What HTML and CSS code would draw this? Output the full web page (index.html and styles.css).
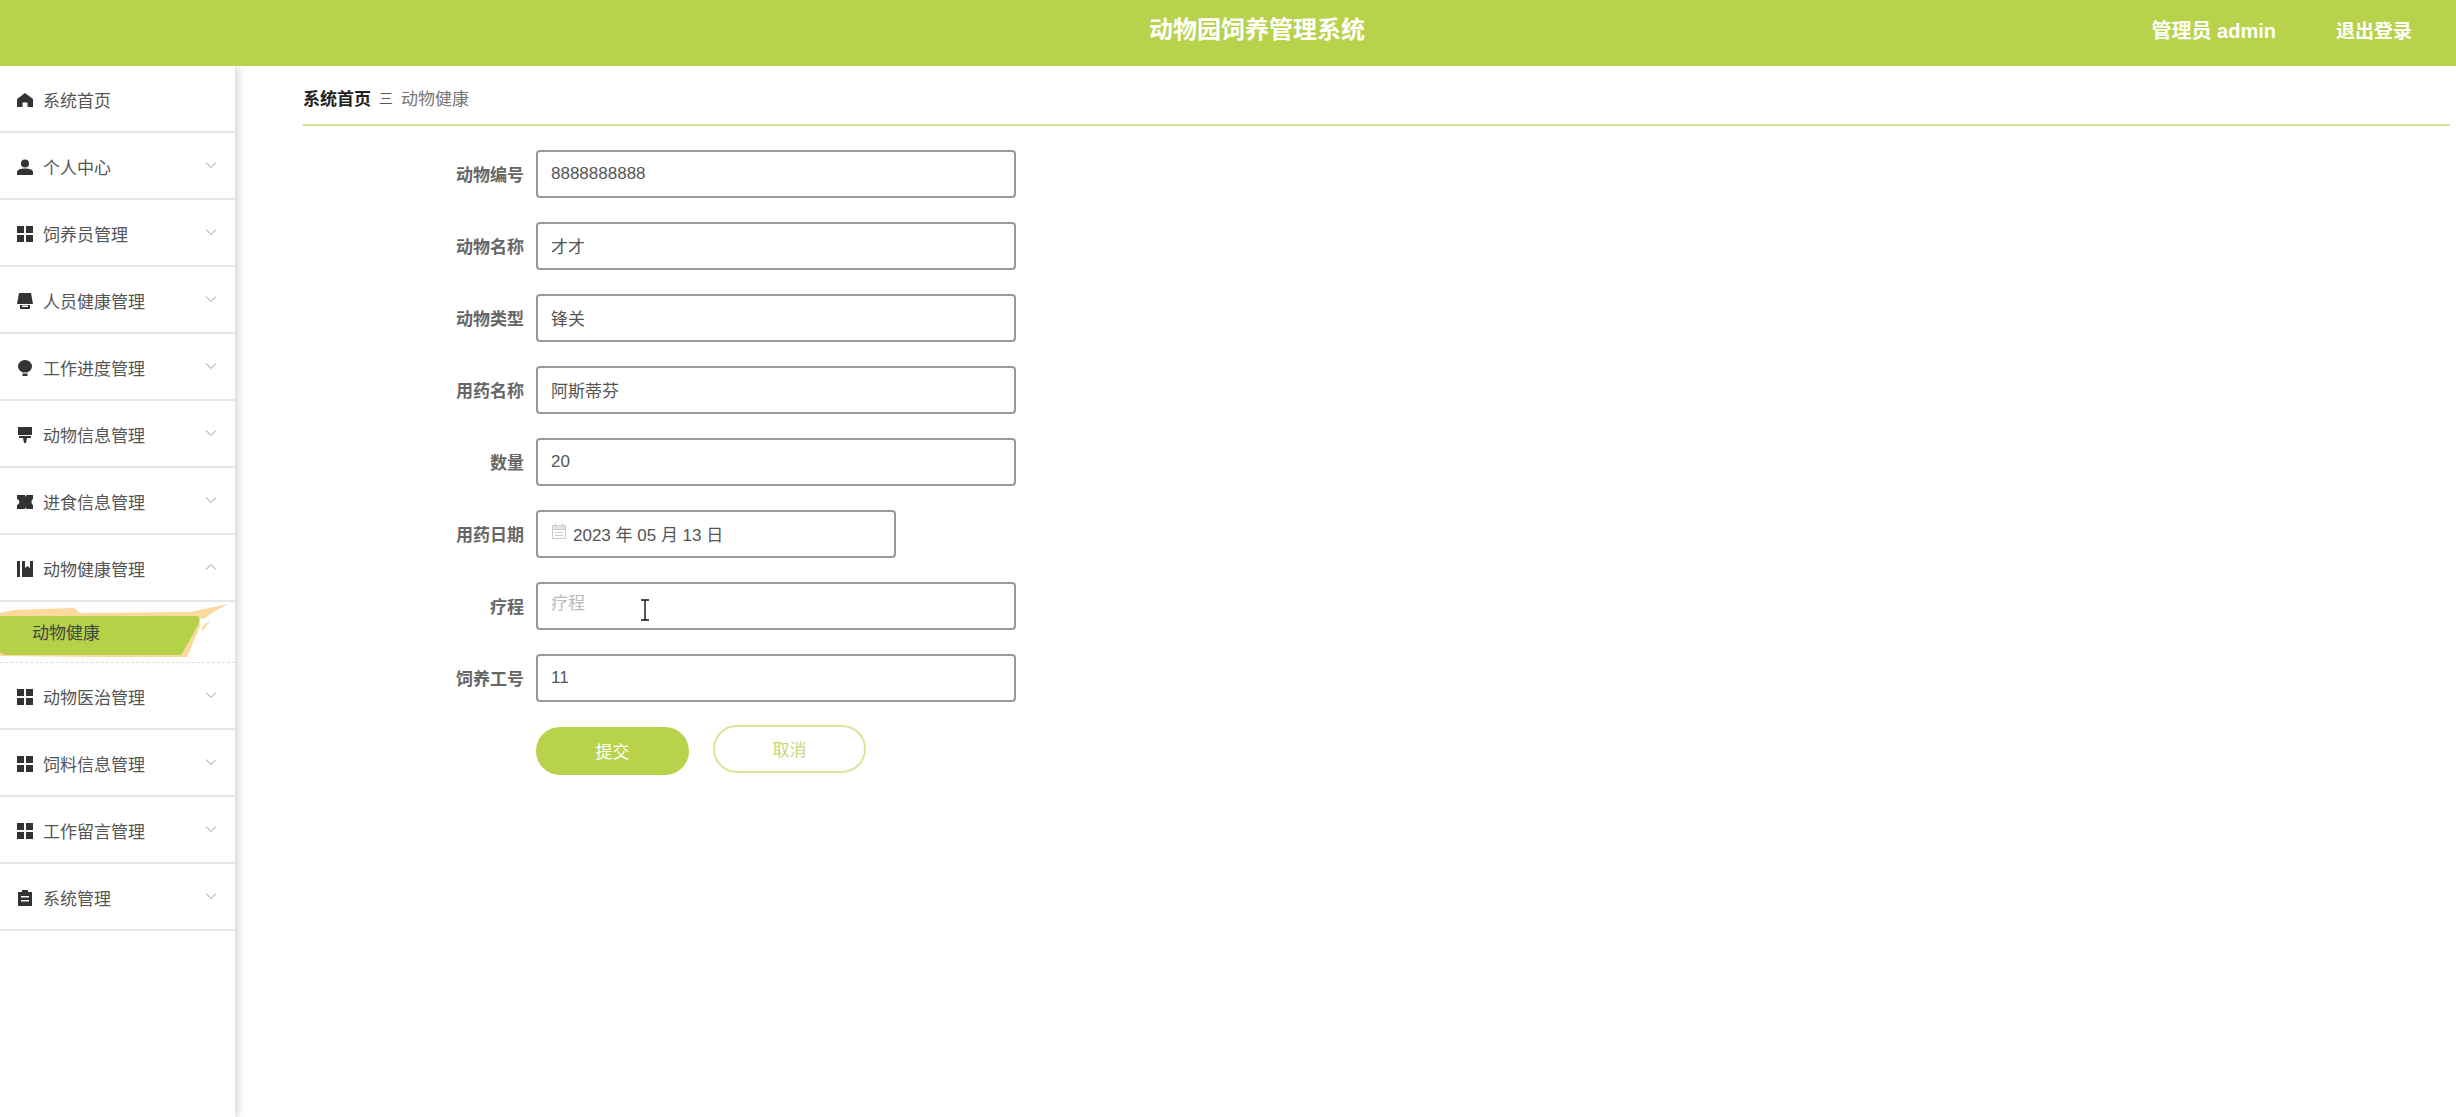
FILE: index.html
```html
<!DOCTYPE html>
<html lang="zh-CN">
<head>
    <meta charset="UTF-8">
    <meta name="viewport" content="width=device-width, initial-scale=1.0">
    <title>动物园饲养管理系统</title>
    <link rel="stylesheet" href="styles.css">
</head>
<body>
    <svg class="sprites" width="0" height="0">
        <symbol id="i-home" viewBox="0 0 16 16"><path d="M8 1 L16 7 V15 H10.5 V10.5 H5.5 V15 H0 V7 Z"/></symbol>
        <symbol id="i-user" viewBox="0 0 16 16"><circle cx="8" cy="4.5" r="4"/><path d="M0 16 V13 C0 10.5 4 9.5 8 9.5 C12 9.5 16 10.5 16 13 V16 Z"/></symbol>
        <symbol id="i-grid" viewBox="0 0 16 16"><rect width="7" height="7"/><rect x="9" width="7" height="7"/><rect y="9" width="7" height="7"/><rect x="9" y="9" width="7" height="7"/></symbol>
        <symbol id="i-shop" viewBox="0 0 16 16"><path d="M2 0 H14 L16 11 H0 Z"/><path d="M3 12 H13 V16 H3 Z M5 12.5 V14 H11 V12.5 Z" fill-rule="evenodd"/></symbol>
        <symbol id="i-bulb" viewBox="0 0 16 16"><path d="M8 0 C12 0 15 3 15 6.5 C15 9 13 11 10.5 12.5 H5.5 C3 11 1 9 1 6.5 C1 3 4 0 8 0 Z"/><rect x="5.5" y="13.5" width="5" height="2.5"/></symbol>
        <symbol id="i-brush" viewBox="0 0 16 16"><path d="M1 0 H15 V8 H1 Z"/><path d="M2 9 H14 V11 H10 L9 16 H7 L6 11 H2 Z"/></symbol>
        <symbol id="i-ticket" viewBox="0 0 16 16"><path d="M0 1 H8 C8.5 3 9 3 9.5 1 H16 V5 C14 6 14 10 16 11 V15 H9.5 C9 13 8.5 13 8 15 H0 V11 C3 10 3 6 0 5 Z"/></symbol>
        <symbol id="i-book" viewBox="0 0 16 16"><rect width="3" height="16"/><path d="M5 0 H8 V7 L10.5 5 L13 7 V0 H16 V16 H5 Z"/></symbol>
        <symbol id="i-clip" viewBox="0 0 16 16"><path fill-rule="evenodd" d="M1 2 H5 V0 H11 V2 H15 V16 H1 Z M4 6 V7.5 H12 V6 Z M4 10 V11.5 H12 V10 Z"/></symbol>
        <symbol id="i-down" viewBox="0 0 12 8"><path d="M1 1.5 L6 6.5 L11 1.5" fill="none" stroke="#999" stroke-width="1"/></symbol>
        <symbol id="i-up" viewBox="0 0 12 8"><path d="M1 6.5 L6 1.5 L11 6.5" fill="none" stroke="#999" stroke-width="1"/></symbol>
    </svg>

    <!-- top bar -->
    <header class="topbar">
        <div class="topbar-title">动物园饲养管理系统</div>
        <div class="topbar-user">
            <span class="topbar-name">管理员 admin</span>
            <span>退出登录</span>
        </div>
    </header>

    <div class="layout">
        <!-- left menu -->
        <aside class="sidebar">
            <div class="menu-item">
                <svg class="menu-icon"><use href="#i-home"/></svg><span>系统首页</span>
            </div>
            <div class="menu-item">
                <svg class="menu-icon"><use href="#i-user"/></svg><span>个人中心</span>
                <svg class="menu-arrow"><use href="#i-down"/></svg>
            </div>
            <div class="menu-item">
                <svg class="menu-icon"><use href="#i-grid"/></svg><span>饲养员管理</span>
                <svg class="menu-arrow"><use href="#i-down"/></svg>
            </div>
            <div class="menu-item">
                <svg class="menu-icon"><use href="#i-shop"/></svg><span>人员健康管理</span>
                <svg class="menu-arrow"><use href="#i-down"/></svg>
            </div>
            <div class="menu-item">
                <svg class="menu-icon"><use href="#i-bulb"/></svg><span>工作进度管理</span>
                <svg class="menu-arrow"><use href="#i-down"/></svg>
            </div>
            <div class="menu-item">
                <svg class="menu-icon"><use href="#i-brush"/></svg><span>动物信息管理</span>
                <svg class="menu-arrow"><use href="#i-down"/></svg>
            </div>
            <div class="menu-item">
                <svg class="menu-icon"><use href="#i-ticket"/></svg><span>进食信息管理</span>
                <svg class="menu-arrow"><use href="#i-down"/></svg>
            </div>
            <div class="menu-item">
                <svg class="menu-icon"><use href="#i-book"/></svg><span>动物健康管理</span>
                <svg class="menu-arrow"><use href="#i-up"/></svg>
            </div>
            <div class="submenu-item">
                <svg class="submenu-bg" viewBox="0 0 235 61" preserveAspectRatio="none">
                    <path fill="#fbd89c" d="M0 11 L14 8 L74 6 L80 11 L190 10 L228 2 C218 8 210 11 204 17 L200 16 L0 16 Z"/>
                    <path fill="#fbd89c" d="M202 26 C205 21 208 20 211 19 C207 22 205 26 203 30 Z"/>
                    <path fill="#fbd89c" d="M199 21 L201 22 L187 55 L100 55 L0 54 V49 Z"/>
                    <path fill="#b5d147" d="M0 14 H195 C199 14 201 17 199 21 L183 50 C182 52 181 53 179 53 H8 C3 53 0 51 0 49 Z"/>
                </svg>
                <span>动物健康</span>
            </div>
            <div class="menu-item">
                <svg class="menu-icon"><use href="#i-grid"/></svg><span>动物医治管理</span>
                <svg class="menu-arrow"><use href="#i-down"/></svg>
            </div>
            <div class="menu-item">
                <svg class="menu-icon"><use href="#i-grid"/></svg><span>饲料信息管理</span>
                <svg class="menu-arrow"><use href="#i-down"/></svg>
            </div>
            <div class="menu-item">
                <svg class="menu-icon"><use href="#i-grid"/></svg><span>工作留言管理</span>
                <svg class="menu-arrow"><use href="#i-down"/></svg>
            </div>
            <div class="menu-item">
                <svg class="menu-icon"><use href="#i-clip"/></svg><span>系统管理</span>
                <svg class="menu-arrow"><use href="#i-down"/></svg>
            </div>
        </aside>

        <main class="content">
            <div class="breadcrumb">
                <b>系统首页</b>
                <span class="breadcrumb-sep">三</span>
                <span class="breadcrumb-now">动物健康</span>
            </div>

            <!-- form -->
            <form class="health-form">
                <label>动物编号</label>
                <input class="field" type="text" value="8888888888">
                <label>动物名称</label>
                <input class="field" type="text" value="才才">
                <label>动物类型</label>
                <input class="field" type="text" value="锋关">
                <label>用药名称</label>
                <input class="field" type="text" value="阿斯蒂芬">
                <label>数量</label>
                <input class="field" type="text" value="20">
                <label>用药日期</label>
                <div class="field field-date">
                    <svg class="date-icon" viewBox="0 0 16 16">
                        <path fill="#e4e4e4" stroke="#ccc" d="M1.5 2.5 H14.5 V15.5 H1.5 Z"/>
                        <path fill="#fff" stroke="#ccc" d="M1.5 6.5 H14.5 V15.5 H1.5 Z M4 9.5 H12 M4 12.5 H12"/>
                        <path fill="none" stroke="#ccc" d="M4.5 0.5 V3.5 M11.5 0.5 V3.5"/>
                    </svg>
                    <span>2023 年 05 月 13 日</span>
                </div>
                <label>疗程</label>
                <div class="field-wrap">
                    <input class="field field-empty" type="text" placeholder="疗程">
                    <svg class="text-cursor" viewBox="0 0 10 22">
                        <path fill="none" stroke="#111" stroke-width="1.4" d="M1 1 H9 M5 1 V21 M1 21 H9"/>
                    </svg>
                </div>
                <label>饲养工号</label>
                <input class="field" type="text" value="11">
                <div class="form-buttons">
                    <button type="button" class="btn btn-submit">提交</button>
                    <button type="button" class="btn btn-cancel">取消</button>
                </div>
            </form>
        </main>
    </div>
</body>
</html>
```

FILE: styles.css
```css
body {
    margin: 0;
    background-color: #fff;
    color: #555;
    font-family: "Liberation Sans", "Noto Sans CJK SC", sans-serif;
    font-size: 17px;
}
.sprites {
    display: block;
}
.topbar {
    position: relative;
    display: flex;
    justify-content: flex-end;
    align-items: center;
    height: 66px;
    background-color: #b8d24b;
    color: #fff;
    font-weight: bold;
}
.topbar-title {
    position: absolute;
    left: 1149px;
    top: 14px;
    font-size: 24px;
    line-height: 32px;
}
.topbar-user {
    display: flex;
    align-items: center;
    gap: 60px;
    padding-right: 44px;
    padding-bottom: 8px;
    font-size: 19px;
}
.topbar-name {
    font-size: 20px;
}
.layout {
    display: flex;
    min-height: 1051px;
}
.sidebar {
    width: 235px;
    flex-shrink: 0;
    box-shadow: 3px 0 8px rgba(0, 0, 0, 0.16);
}
.menu-item {
    display: flex;
    align-items: center;
    box-sizing: border-box;
    height: 67px;
    padding: 2px 17px 0;
    border-bottom: 2px solid #e6e6e6;
    color: #555;
}
.menu-icon {
    width: 16px;
    height: 16px;
    margin-right: 10px;
    fill: #333;
}
.menu-arrow {
    width: 12px;
    height: 8px;
    margin-left: auto;
    margin-right: 1px;
    margin-top: -3px;
}
.submenu-item {
    position: relative;
    box-sizing: border-box;
    height: 61px;
    padding: 13px 0 0 32px;
    border-bottom: 1px dashed #ddd;
    line-height: 38px;
    color: #444;
}
.submenu-item span {
    position: relative;
}
.submenu-bg {
    position: absolute;
    left: 0;
    top: 0;
    width: 235px;
    height: 61px;
}
.content {
    flex: 1;
    padding: 0 6px 0 68px;
}
.breadcrumb {
    display: flex;
    align-items: center;
    box-sizing: border-box;
    height: 60px;
    padding-top: 4px;
    border-bottom: 2px solid #d6e28f;
}
.breadcrumb b {
    color: #222;
}
.breadcrumb-sep {
    margin: 0 8px;
    font-size: 14px;
    color: #555;
}
.breadcrumb-now {
    color: #777;
}
.health-form {
    display: grid;
    grid-template-columns: 221px 480px;
    column-gap: 12px;
    row-gap: 24px;
    align-items: center;
    justify-items: start;
    padding-top: 24px;
}
.health-form label {
    justify-self: end;
    padding-bottom: 2px;
    font-weight: bold;
    color: #666;
}
.field {
    box-sizing: border-box;
    width: 480px;
    height: 48px;
    padding: 0 13px 1px;
    border: 2px solid #999;
    border-radius: 4px;
    background-color: #fff;
    font-family: inherit;
    font-size: 17px;
    color: #555;
}
.field::placeholder {
    color: #bbb;
}
.field-date {
    display: flex;
    align-items: center;
    width: 360px;
}
.date-icon {
    width: 16px;
    height: 16px;
    margin-right: 6px;
    margin-top: -6px;
}
.field-wrap {
    position: relative;
}
.field-wrap .field {
    display: block;
}
.field-empty {
    padding-bottom: 4px;
}
.text-cursor {
    position: absolute;
    left: 104px;
    top: 17px;
    width: 10px;
    height: 22px;
}
.form-buttons {
    grid-column: 2;
    display: flex;
    align-items: flex-start;
    gap: 24px;
    margin-top: -1px;
}
.btn {
    box-sizing: border-box;
    width: 153px;
    height: 48px;
    padding-bottom: 3px;
    border-radius: 24px;
    font-family: inherit;
    font-size: 17px;
    color: #fff;
}
.btn-submit {
    margin-top: 2px;
    border: none;
    background-color: #b8d24b;
}
.btn-cancel {
    border: 2px solid #d9e59b;
    background-color: #fff;
    color: #c4d873;
}
```
